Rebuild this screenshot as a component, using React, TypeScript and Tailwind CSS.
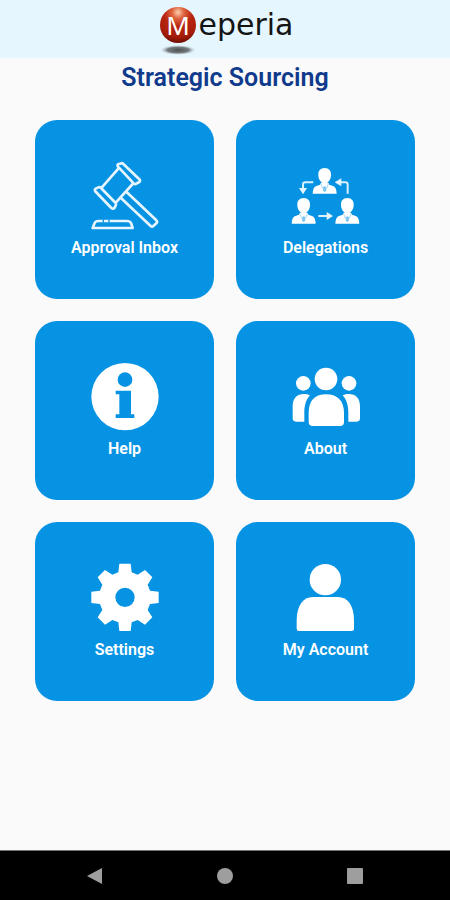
import React from 'react';

const icon = 'block size-[72px]';

function GavelIcon() {
  return (
    <svg viewBox="26 30 216 216" className={icon} fill="none" stroke="#e6f5ff" strokeWidth="8" strokeLinejoin="round" strokeLinecap="round" aria-hidden="true">
      <path d="M113 50 Q110 46 114 42 L121 41 Q125 38 129 42 L177 88 Q181 92 177 96 L168 101 Q164 104 160 100 Z" />
      <path d="M44 123 Q42 119 46 116 L54 112 Q58 110 62 114 L106 159 Q109 163 106 167 L102 174 Q98 178 93 174 Z" />
      <path d="M114 56 L64 113 M157 102 L107 157" />
      <path d="M121 143 L211 228 Q215 232 219 228 L229 219 Q232 215 228 211 L138 125" />
      <path d="M37 234 L43 219 Q46 213 54 213 L139 213 Q149 213 152 219 L157 234 Z" />
      <path d="M67 213 h4 M84 213 h4" stroke="#0693e3" strokeWidth="9" strokeLinecap="butt" />
    </svg>
  );
}

function Delegate({ x, y }: { x: number; y: number }) {
  return (
    <g transform={`translate(${x} ${y})`}>
      <path d="M0 -77 C13 -77 20 -68 19 -56 C19 -43 11 -31 0 -31 C-11 -31 -19 -43 -19 -56 C-20 -68 -13 -77 0 -77Z" />
      <path d="M-11 -33 L11 -33 L14 -27 L27 -22 Q35 -18 36 0 L-36 0 Q-35 -18 -27 -22 L-14 -27Z" />
      <path d="M-11 -29 L-6 -16 L0 -23 L6 -16 L11 -29" fill="none" stroke="#7cc6f1" strokeWidth="2" />
      <path d="M-4 -20 H4 L5 -9 L0 -5 L-5 -9Z" fill="#7cc6f1" />
    </g>
  );
}

function DelegationsIcon() {
  return (
    <svg viewBox="28 30 216 216" className={icon} fill="#fff" aria-hidden="true">
      <Delegate x={132} y={131} />
      <Delegate x={69} y={221} />
      <Delegate x={200} y={221} />
      <g fill="none" stroke="#d9f0ff" strokeWidth="6">
        <path d="M98 97 H74 Q67 97 67 104 V120" />
        <path d="M201 131 V104 Q201 97 194 97 H175" />
        <path d="M113 198 H145" />
      </g>
      <g fill="#e6f5ff">
        <path d="M55 114 L79 114 L67 133Z" />
        <path d="M182 85 L182 109 L162 97Z" />
        <path d="M138 186 L138 210 L157 198Z" />
      </g>
    </svg>
  );
}

function HelpIcon() {
  return (
    <svg viewBox="26 33 216 216" className={icon} aria-hidden="true">
      <circle cx="134" cy="140" r="101" fill="#fff" />
      <circle cx="134" cy="89" r="22" fill="#0693e3" />
      <path d="M106 122 H152 V193 H162 V204 H106 V193 H117 V133 H106Z" fill="#0693e3" />
    </svg>
  );
}

function AboutIcon() {
  return (
    <svg viewBox="28 33 216 216" className={icon} fill="#fff" aria-hidden="true">
      <circle cx="136" cy="87" r="34" />
      <circle cx="68" cy="100" r="22" />
      <circle cx="205" cy="100" r="22" />
      <path d="M84 188 C84 150 104 133 136 133 C168 133 190 150 190 188 V216 Q190 228 178 228 H96 Q84 228 84 216Z" />
      <path d="M88 136 C82 133 76 132 70 132 C48 132 36 146 36 168 V205 Q36 215 46 215 H71 V188 C71 167 76 149 88 136Z" />
      <path d="M186 136 C192 133 198 132 204 132 C226 132 238 146 238 168 V205 Q238 215 228 215 H203 V188 C203 167 198 149 186 136Z" />
    </svg>
  );
}

function SettingsIcon() {
  return (
    <svg viewBox="26 36 216 216" className={icon} fill="#fff" aria-hidden="true">
      <g transform="translate(134 142)">
        <path
          fillRule="evenodd"
          d="M-17 -101 H17 L20 -75 L38 -68 L60 -82 L82 -60 L68 -38 L75 -20 L101 -17 V17 L75 20 L68 38 L82 60 L60 82 L38 68 L20 75 L17 101 H-17 L-20 75 L-38 68 L-60 82 L-82 60 L-68 38 L-75 20 L-101 17 V-17 L-75 -20 L-68 -38 L-82 -60 L-60 -82 L-38 -68 L-20 -75Z M0 -29 A29 29 0 1 0 0 29 A29 29 0 1 0 0 -29Z"
        />
      </g>
    </svg>
  );
}

function AccountIcon() {
  return (
    <svg viewBox="28 36 216 216" className={icon} fill="#fff" aria-hidden="true">
      <circle cx="134" cy="89" r="47" />
      <path d="M48 212 C48 166 68 141 96 141 H172 C201 141 220 166 220 212 V236 Q220 243 213 243 H55 Q48 243 48 236Z" />
    </svg>
  );
}

const tiles = [
  { label: 'Approval Inbox', Icon: GavelIcon },
  { label: 'Delegations', Icon: DelegationsIcon },
  { label: 'Help', Icon: HelpIcon },
  { label: 'About', Icon: AboutIcon },
  { label: 'Settings', Icon: SettingsIcon },
  { label: 'My Account', Icon: AccountIcon },
];

function Logo() {
  return (
    <div className="flex items-start gap-0.5 pl-1 text-[#151515]">
      <svg viewBox="0 0 36 48" className="h-12 w-9 shrink-0" role="img" aria-label="M">
        <defs>
          <radialGradient id="ball" cx="50%" cy="15%" r="85%">
            <stop offset="0" stopColor="#fbd0b0" />
            <stop offset="0.2" stopColor="#e0643f" />
            <stop offset="0.45" stopColor="#b82510" />
            <stop offset="0.8" stopColor="#a51c0a" />
            <stop offset="1" stopColor="#6e0d04" />
          </radialGradient>
          <radialGradient id="shade">
            <stop offset="0" stopColor="#4d5052" />
            <stop offset="0.6" stopColor="#757c80" />
            <stop offset="1" stopColor="#cfe0ea" stopOpacity="0" />
          </radialGradient>
        </defs>
        <ellipse cx="18" cy="43" rx="18" ry="5" fill="url(#shade)" />
        <circle cx="18" cy="18" r="18" fill="url(#ball)" />
        <text x="18" y="28" textAnchor="middle" fontSize="26" fill="#fff" fontFamily="'Noto Sans', sans-serif">M</text>
      </svg>
      <span className="font-['DejaVu_Sans',sans-serif] text-[30px] leading-9">eperia</span>
    </div>
  );
}

export default function App() {
  return (
    <div className="flex min-h-screen flex-col bg-[#fafafa] font-[Roboto,sans-serif]">
      <header className="flex h-[58px] justify-center bg-[#e6f6ff] pt-[7px]">
        <Logo />
      </header>
      <main className="flex-1 px-[35px]">
        <h1 className="pt-1 text-center text-[25px] leading-8 font-semibold text-[#103a8c]">Strategic Sourcing</h1>
        <div className="grid grid-cols-2 gap-[22px] pt-[26px]">
          {tiles.map(({ label, Icon }) => (
            <button key={label} type="button" className="flex aspect-square flex-col items-center gap-1.5 rounded-[22px] bg-[#0693e3] pt-10 text-white">
              <Icon />
              <span className="text-base leading-5 font-semibold">{label}</span>
            </button>
          ))}
        </div>
      </main>
      <nav aria-label="System" className="flex h-[50px] border-t border-[#777] bg-black px-[30px]">
        <button type="button" aria-label="Back" className="flex flex-1 items-center justify-center">
          <svg viewBox="0 0 18 18" className="size-[18px]" fill="#9e9e9e"><path d="M1 9 L16 1 V17Z" /></svg>
        </button>
        <button type="button" aria-label="Home" className="flex flex-1 items-center justify-center">
          <span className="size-4 rounded-full bg-[#9e9e9e]" />
        </button>
        <button type="button" aria-label="Recent apps" className="flex flex-1 items-center justify-center">
          <span className="size-4 rounded-[1px] bg-[#9e9e9e]" />
        </button>
      </nav>
    </div>
  );
}
